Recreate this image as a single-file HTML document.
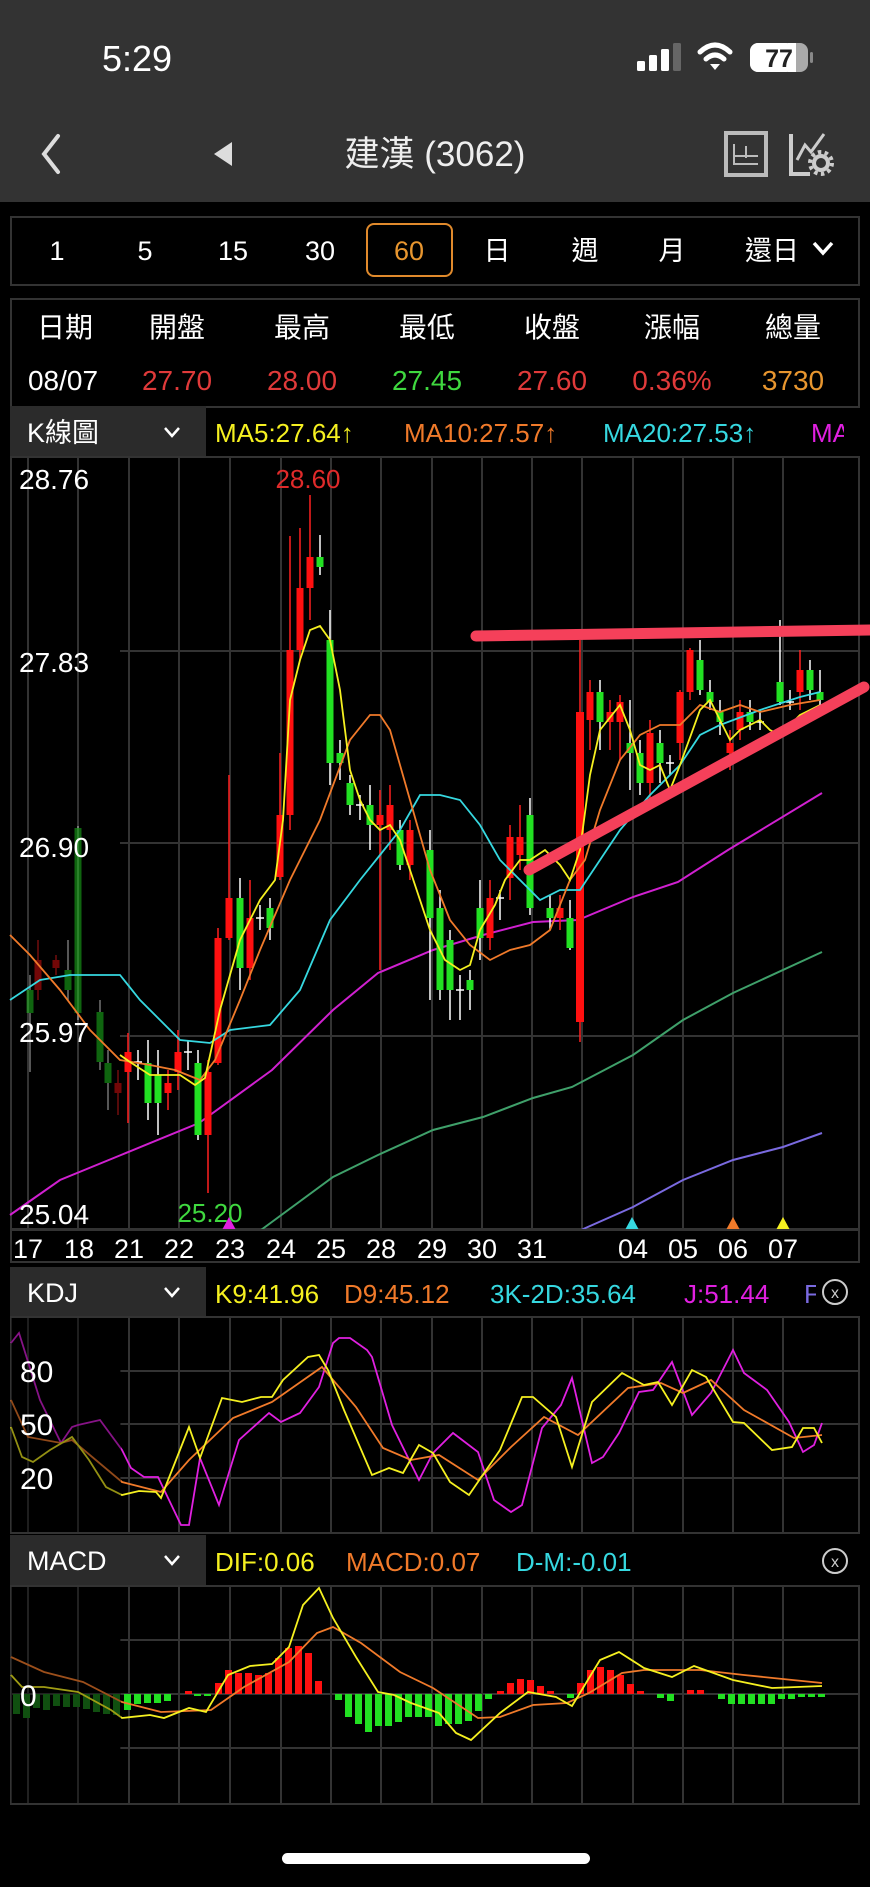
<!DOCTYPE html>
<html><head><meta charset="utf-8">
<style>
html,body{margin:0;padding:0;background:#000;}
body{width:870px;height:1882px;overflow:hidden;font-family:"Liberation Sans","Noto Sans CJK TC",sans-serif;}
svg text{font-family:"Liberation Sans","Noto Sans CJK TC",sans-serif;}
.r line{stroke:#ff2020;stroke-width:1.5}.r rect{fill:#ff1010}
.g line{stroke:#fff;stroke-width:1.5}.g rect{fill:#22e022}
.c line{stroke:#fff;stroke-width:1.5}
.grid line{stroke:#333;stroke-width:2}
</style></head><body>
<svg width="870" height="1882" viewBox="0 0 870 1882" xmlns="http://www.w3.org/2000/svg">
<rect x="0" y="0" width="870" height="202" fill="#333"/>
<text x="102" y="71" fill="#fff" font-size="36">5:29</text>
<rect x="637" y="61" width="8" height="10" rx="1.5" fill="#fff"/>
<rect x="649" y="55" width="8" height="16" rx="1.5" fill="#fff"/>
<rect x="661" y="49" width="8" height="22" rx="1.5" fill="#fff"/>
<rect x="673" y="43" width="8" height="28" rx="1.5" fill="#666"/>
<path d="M700 52 Q715 38 730 52" stroke="#fff" stroke-width="5" fill="none" stroke-linecap="round"/>
<path d="M706 59 Q715 51 724 59" stroke="#fff" stroke-width="5" fill="none" stroke-linecap="round"/>
<path d="M710 64 L715 70 L720 64 Z" fill="#fff"/>
<rect x="750" y="43" width="58" height="29" rx="8" fill="#aaa"/>
<rect x="750" y="43" width="44" height="29" rx="8" fill="#fff"/>
<rect x="788" y="43" width="8" height="29" fill="#fff"/>
<rect x="810" y="52" width="3" height="11" rx="1.5" fill="#888"/>
<text x="779" y="67" fill="#222" font-size="25" font-weight="bold" text-anchor="middle">77</text>
<path d="M58 136 L44 154 L58 172" stroke="#ddd" stroke-width="4" fill="none" stroke-linecap="round"/>
<path d="M232 142 L214 154 L232 166 Z" fill="#ddd"/>
<text x="435" y="166" fill="#eee" font-size="35" text-anchor="middle">建漢 (3062)</text>
<rect x="726" y="133" width="40" height="42" fill="none" stroke="#bbb" stroke-width="4"/>
<path d="M734 144 V164 H758 M734 156 H758 M746 146 V158" stroke="#bbb" stroke-width="2" fill="none"/>
<path d="M791 134 V174 H810" stroke="#ccc" stroke-width="4" fill="none"/>
<path d="M797 160 L805 145 L811 152 L824 134" stroke="#ccc" stroke-width="3" fill="none"/>
<circle cx="821" cy="163" r="7" fill="none" stroke="#ccc" stroke-width="4"/>
<circle cx="821" cy="163" r="11" fill="none" stroke="#ccc" stroke-width="4" stroke-dasharray="3.5 3.4"/>

<rect x="11" y="217" width="848" height="68" fill="#000" stroke="#333" stroke-width="2"/>
<g fill="#fff" font-size="27" text-anchor="middle">
<text x="57" y="260">1</text><text x="145" y="260">5</text><text x="233" y="260">15</text><text x="320" y="260">30</text>
<text x="497" y="260">日</text><text x="585" y="260">週</text><text x="672" y="260">月</text><text x="772" y="260">還日</text></g>
<rect x="367" y="224" width="85" height="52" rx="7" fill="none" stroke="#e08a2c" stroke-width="2"/>
<text x="409" y="260" fill="#e8962f" font-size="27" text-anchor="middle">60</text>
<path d="M814 243 L823 253 L832 243" stroke="#fff" stroke-width="3.5" fill="none"/>

<rect x="11" y="299" width="848" height="108" fill="#000" stroke="#333" stroke-width="2"/>
<g fill="#fff" font-size="28" text-anchor="middle">
<text x="65" y="337">日期</text><text x="177" y="337">開盤</text><text x="302" y="337">最高</text><text x="427" y="337">最低</text><text x="552" y="337">收盤</text><text x="672" y="337">漲幅</text><text x="793" y="337">總量</text></g>
<g font-size="28" text-anchor="middle">
<text x="63" y="390" fill="#fff">08/07</text><text x="177" y="390" fill="#e03a3a">27.70</text><text x="302" y="390" fill="#e03a3a">28.00</text><text x="427" y="390" fill="#3fd83f">27.45</text><text x="552" y="390" fill="#e03a3a">27.60</text><text x="672" y="390" fill="#e03a3a">0.36%</text><text x="793" y="390" fill="#e8962f">3730</text></g>

<rect x="10" y="406" width="196" height="50" fill="#2b2b2b"/>
<rect x="206" y="410" width="654" height="46" fill="#000"/>
<text x="27" y="442" fill="#fff" font-size="27">K線圖</text>
<path d="M165 428 L172 436 L179 428" stroke="#fff" stroke-width="2.5" fill="none"/>
<svg x="206" y="406" width="638" height="50"><g font-size="26">
<text x="9" y="36" fill="#f5f020">MA5:27.64↑</text><text x="198" y="36" fill="#f07a2a">MA10:27.57↑</text><text x="397" y="36" fill="#36d8e0">MA20:27.53↑</text><text x="605" y="36" fill="#e020e0">MA</text></g></svg>

<g class="grid">
<rect x="11" y="457" width="848" height="772" fill="none" stroke="#333" stroke-width="2"/>
<line x1="120" y1="651" x2="859" y2="651"/><line x1="120" y1="843" x2="859" y2="843"/><line x1="120" y1="1036" x2="859" y2="1036"/>
<line x1="28" y1="457" x2="28" y2="1229"/><line x1="78" y1="457" x2="78" y2="1229"/><line x1="129" y1="457" x2="129" y2="1229"/><line x1="179" y1="457" x2="179" y2="1229"/><line x1="230" y1="457" x2="230" y2="1229"/><line x1="281" y1="457" x2="281" y2="1229"/><line x1="331" y1="457" x2="331" y2="1229"/><line x1="381" y1="457" x2="381" y2="1229"/><line x1="432" y1="457" x2="432" y2="1229"/><line x1="482" y1="457" x2="482" y2="1229"/><line x1="532" y1="457" x2="532" y2="1229"/><line x1="582" y1="457" x2="582" y2="1229"/><line x1="633" y1="457" x2="633" y2="1229"/><line x1="683" y1="457" x2="683" y2="1229"/><line x1="733" y1="457" x2="733" y2="1229"/><line x1="783" y1="457" x2="783" y2="1229"/>
</g>
<text x="308" y="488" fill="#e02a2a" font-size="26" text-anchor="middle">28.60</text>
<text x="210" y="1222" fill="#3fd83f" font-size="26" text-anchor="middle">25.20</text>

<polyline fill="none" stroke="#d020d0" stroke-width="2" points="10,1215 60,1180 121,1155 199,1123 272,1070 333,1010 378,973 433,950 483,935 533,922 578,920 633,897 678,882 728,850 822,793"/>
<polyline fill="none" stroke="#3fa06a" stroke-width="2" points="261,1230 333,1177 378,1155 433,1130 483,1117 533,1098 572,1087 633,1055 683,1020 733,993 822,952"/>
<polyline fill="none" stroke="#7a6ae0" stroke-width="2" points="581,1230 633,1207 683,1180 733,1160 783,1147 822,1133"/>

<g opacity="0.45">
<g class="g"><line x1="30" y1="975" x2="30" y2="1072"/><rect x="26.5" y="990" width="7" height="23"/></g>
<g class="r"><line x1="38" y1="940" x2="38" y2="1000"/><rect x="34.5" y="960" width="7" height="30"/></g>
<g class="r"><line x1="56" y1="955" x2="56" y2="975"/><rect x="52.5" y="960" width="7" height="8"/></g>
<g class="g"><line x1="68" y1="940" x2="68" y2="1000"/><rect x="64.5" y="970" width="7" height="20"/></g>
<g class="g"><line x1="78" y1="826" x2="78" y2="1020"/><rect x="74.5" y="828" width="7" height="185"/></g>
<g class="g"><line x1="100" y1="1000" x2="100" y2="1070"/><rect x="96.5" y="1012" width="7" height="50"/></g>
<g class="g"><line x1="108" y1="1050" x2="108" y2="1110"/><rect x="104.5" y="1063" width="7" height="20"/></g>
<g class="r"><line x1="118" y1="1070" x2="118" y2="1115"/><rect x="114.5" y="1083" width="7" height="10"/></g>
</g>
<g class="r"><line x1="128" y1="1033" x2="128" y2="1123"/><rect x="124.5" y="1052" width="7" height="20"/></g>
<g class="c"><line x1="138" y1="1050" x2="138" y2="1080"/><line x1="134" y1="1062" x2="142" y2="1062"/></g>
<g class="g"><line x1="148" y1="1040" x2="148" y2="1120"/><rect x="144.5" y="1063" width="7" height="40"/></g>
<g class="g"><line x1="158" y1="1050" x2="158" y2="1135"/><rect x="154.5" y="1075" width="7" height="28"/></g>
<g class="r"><line x1="168" y1="1070" x2="168" y2="1110"/><rect x="164.5" y="1083" width="7" height="10"/></g>
<g class="r"><line x1="178" y1="1030" x2="178" y2="1090"/><rect x="174.5" y="1052" width="7" height="20"/></g>
<g class="c"><line x1="188" y1="1040" x2="188" y2="1070"/><line x1="184" y1="1052" x2="192" y2="1052"/></g>
<g class="g"><line x1="198" y1="1050" x2="198" y2="1140"/><rect x="194.5" y="1063" width="7" height="72"/></g>
<g class="r"><line x1="208" y1="1060" x2="208" y2="1193" stroke="#fff"/><rect x="204.5" y="1072" width="7" height="63"/></g>
<g class="r"><line x1="218" y1="928" x2="218" y2="1065"/><rect x="214.5" y="938" width="7" height="125"/></g>
<g class="r"><line x1="229" y1="775" x2="229" y2="940" stroke="#fff"/><rect x="225.5" y="898" width="7" height="40"/></g>
<g class="g"><line x1="240" y1="878" x2="240" y2="990"/><rect x="236.5" y="898" width="7" height="70"/></g>
<g class="r"><line x1="250" y1="880" x2="250" y2="980" stroke="#fff"/><rect x="246.5" y="918" width="7" height="50"/></g>
<g class="c"><line x1="260" y1="905" x2="260" y2="930"/><line x1="256" y1="918" x2="264" y2="918"/></g>
<g class="g"><line x1="270" y1="898" x2="270" y2="940"/><rect x="266.5" y="908" width="7" height="20"/></g>
<g class="r"><line x1="280" y1="753" x2="280" y2="880" stroke="#fff"/><rect x="276.5" y="815" width="7" height="62"/></g>
<g class="r"><line x1="290" y1="536" x2="290" y2="830" stroke="#fff"/><rect x="286.5" y="650" width="7" height="165"/></g>
<g class="r"><line x1="300" y1="528" x2="300" y2="660" stroke="#fff"/><rect x="296.5" y="588" width="7" height="62"/></g>
<g class="r"><line x1="310" y1="495" x2="310" y2="620" stroke="#fff"/><rect x="306.5" y="557" width="7" height="31"/></g>
<g class="g"><line x1="320" y1="535" x2="320" y2="575"/><rect x="316.5" y="557" width="7" height="10"/></g>
<g class="g"><line x1="330" y1="610" x2="330" y2="785"/><rect x="326.5" y="640" width="7" height="123"/></g>
<g class="g"><line x1="340" y1="740" x2="340" y2="780"/><rect x="336.5" y="753" width="7" height="10"/></g>
<g class="g"><line x1="350" y1="775" x2="350" y2="815"/><rect x="346.5" y="783" width="7" height="22"/></g>
<g class="c"><line x1="360" y1="795" x2="360" y2="820"/><line x1="356" y1="805" x2="364" y2="805"/></g>
<g class="g"><line x1="370" y1="785" x2="370" y2="850"/><rect x="366.5" y="805" width="7" height="20"/></g>
<g class="r"><line x1="380" y1="790" x2="380" y2="970" stroke="#fff"/><rect x="376.5" y="815" width="7" height="10"/></g>
<g class="r"><line x1="390" y1="785" x2="390" y2="850" stroke="#fff"/><rect x="386.5" y="805" width="7" height="25"/></g>
<g class="g"><line x1="400" y1="820" x2="400" y2="870"/><rect x="396.5" y="830" width="7" height="35"/></g>
<g class="r"><line x1="410" y1="820" x2="410" y2="880" stroke="#fff"/><rect x="406.5" y="830" width="7" height="35"/></g>
<g class="g"><line x1="430" y1="830" x2="430" y2="1000"/><rect x="426.5" y="850" width="7" height="68"/></g>
<g class="g"><line x1="440" y1="890" x2="440" y2="1000"/><rect x="436.5" y="908" width="7" height="82"/></g>
<g class="g"><line x1="450" y1="930" x2="450" y2="1020"/><rect x="446.5" y="940" width="7" height="50"/></g>
<g class="c"><line x1="460" y1="975" x2="460" y2="1020"/><line x1="456" y1="990" x2="464" y2="990"/></g>
<g class="g"><line x1="470" y1="970" x2="470" y2="1010"/><rect x="466.5" y="980" width="7" height="10"/></g>
<g class="g"><line x1="480" y1="880" x2="480" y2="960"/><rect x="476.5" y="908" width="7" height="30"/></g>
<g class="r"><line x1="490" y1="880" x2="490" y2="950" stroke="#fff"/><rect x="486.5" y="898" width="7" height="40"/></g>
<g class="c"><line x1="500" y1="890" x2="500" y2="920"/><line x1="496" y1="898" x2="504" y2="898"/></g>
<g class="r"><line x1="510" y1="825" x2="510" y2="900" stroke="#fff"/><rect x="506.5" y="837" width="7" height="41"/></g>
<g class="r"><line x1="520" y1="805" x2="520" y2="870" stroke="#fff"/><rect x="516.5" y="837" width="7" height="18"/></g>
<g class="g"><line x1="530" y1="798" x2="530" y2="915"/><rect x="526.5" y="815" width="7" height="93"/></g>
<g class="g"><line x1="550" y1="895" x2="550" y2="930"/><rect x="546.5" y="908" width="7" height="10"/></g>
<g class="r"><line x1="560" y1="895" x2="560" y2="930" stroke="#fff"/><rect x="556.5" y="908" width="7" height="10"/></g>
<g class="g"><line x1="570" y1="900" x2="570" y2="950"/><rect x="566.5" y="918" width="7" height="30"/></g>
<g class="r"><line x1="580" y1="640" x2="580" y2="1042" stroke="#fff"/><rect x="576" y="712" width="8" height="310"/></g>
<g class="r"><line x1="590" y1="680" x2="590" y2="750" stroke="#fff"/><rect x="586.5" y="692" width="7" height="28"/></g>
<g class="g"><line x1="600" y1="680" x2="600" y2="750"/><rect x="596.5" y="692" width="7" height="30"/></g>
<g class="r"><line x1="610" y1="700" x2="610" y2="750" stroke="#fff"/><rect x="606.5" y="712" width="7" height="10"/></g>
<g class="r"><line x1="620" y1="695" x2="620" y2="760" stroke="#fff"/><rect x="616.5" y="702" width="7" height="20"/></g>
<g class="g"><line x1="630" y1="700" x2="630" y2="790"/><rect x="626.5" y="743" width="7" height="10"/></g>
<g class="g"><line x1="640" y1="740" x2="640" y2="795"/><rect x="636.5" y="753" width="7" height="30"/></g>
<g class="r"><line x1="650" y1="720" x2="650" y2="800" stroke="#fff"/><rect x="646.5" y="733" width="7" height="50"/></g>
<g class="g"><line x1="660" y1="730" x2="660" y2="783"/><rect x="656.5" y="743" width="7" height="20"/></g>
<g class="c"><line x1="670" y1="755" x2="670" y2="775"/><line x1="666" y1="763" x2="674" y2="763"/></g>
<g class="r"><line x1="680" y1="690" x2="680" y2="760" stroke="#fff"/><rect x="676.5" y="692" width="7" height="51"/></g>
<g class="r"><line x1="690" y1="648" x2="690" y2="700" stroke="#fff"/><rect x="686.5" y="650" width="7" height="42"/></g>
<g class="g"><line x1="700" y1="640" x2="700" y2="695"/><rect x="696.5" y="660" width="7" height="30"/></g>
<g class="g"><line x1="710" y1="680" x2="710" y2="710"/><rect x="706.5" y="692" width="7" height="10"/></g>
<g class="g"><line x1="720" y1="700" x2="720" y2="735"/><rect x="716.5" y="712" width="7" height="10"/></g>
<g class="r"><line x1="730" y1="730" x2="730" y2="770" stroke="#fff"/><rect x="726.5" y="743" width="7" height="10"/></g>
<g class="r"><line x1="740" y1="700" x2="740" y2="740" stroke="#fff"/><rect x="736.5" y="712" width="7" height="18"/></g>
<g class="g"><line x1="750" y1="700" x2="750" y2="730"/><rect x="746.5" y="712" width="7" height="10"/></g>
<g class="c"><line x1="760" y1="710" x2="760" y2="730"/><line x1="756" y1="722" x2="764" y2="722"/></g>
<g class="g"><line x1="780" y1="620" x2="780" y2="705"/><rect x="776.5" y="682" width="7" height="20"/></g>
<g class="c"><line x1="790" y1="690" x2="790" y2="710"/><line x1="786" y1="702" x2="794" y2="702"/></g>
<g class="r"><line x1="800" y1="650" x2="800" y2="710" stroke="#fff"/><rect x="796.5" y="670" width="7" height="22"/></g>
<g class="g"><line x1="810" y1="660" x2="810" y2="700"/><rect x="806.5" y="670" width="7" height="20"/></g>
<g class="g"><line x1="820" y1="670" x2="820" y2="710"/><rect x="816.5" y="692" width="7" height="8"/></g>

<polyline fill="none" stroke="#36d8e0" stroke-width="1.8" points="10,1000 40,980 70,975 120,975 140,1000 160,1020 180,1040 210,1043 230,1030 270,1025 300,990 330,920 360,880 400,830 420,795 440,795 460,800 480,825 500,860 520,880 540,900 560,890 580,890 600,860 620,830 650,795 680,765 700,735 720,725 760,710 800,697 820,692"/>
<polyline fill="none" stroke="#f07a2a" stroke-width="1.8" points="10,935 30,955 60,990 90,1030 120,1060 150,1065 175,1070 200,1080 215,1060 240,1000 260,950 290,880 320,820 350,740 370,715 380,715 390,730 410,800 430,870 450,920 470,945 490,960 510,950 530,945 550,930 570,880 585,860 600,810 620,760 640,735 660,725 680,725 700,705 720,712 740,705 760,712 790,705 820,700"/>
<polyline fill="none" stroke="#f5f020" stroke-width="1.8" points="120,1055 130,1062 150,1075 180,1075 195,1085 205,1078 220,1010 240,940 260,900 275,880 283,820 290,700 300,660 310,630 320,626 330,640 340,690 350,770 360,800 370,820 380,830 390,825 400,840 410,870 430,930 445,960 460,970 470,965 480,930 495,905 505,880 520,860 530,860 545,850 560,865 570,880 580,850 590,775 600,730 620,705 630,730 640,765 650,770 660,765 670,790 680,765 700,710 710,700 720,720 730,740 740,730 750,725 760,720 770,730 780,735 790,725 800,715 810,710 820,705"/>

<line x1="476" y1="636" x2="870" y2="630" stroke="#f5405a" stroke-width="11" stroke-linecap="round"/>
<line x1="529" y1="870" x2="864" y2="687" stroke="#f5405a" stroke-width="11" stroke-linecap="round"/>

<g fill="#fff" font-size="28">
<text x="19" y="489">28.76</text><text x="19" y="672">27.83</text><text x="19" y="857">26.90</text><text x="19" y="1042">25.97</text><text x="19" y="1224">25.04</text></g>

<path d="M222 1230 L229 1217 L236 1230 Z" fill="#e020e0"/>
<path d="M625 1230 L632 1217 L639 1230 Z" fill="#36d8e0"/>
<path d="M726 1230 L733 1217 L740 1230 Z" fill="#f07a2a"/>
<path d="M776 1230 L783 1217 L790 1230 Z" fill="#f5f020"/>

<rect x="11" y="1230" width="848" height="32" fill="#000" stroke="#333" stroke-width="2"/>
<g fill="#fff" font-size="27" text-anchor="middle">
<text x="28" y="1258">17</text><text x="79" y="1258">18</text><text x="129" y="1258">21</text><text x="179" y="1258">22</text><text x="230" y="1258">23</text><text x="281" y="1258">24</text><text x="331" y="1258">25</text><text x="381" y="1258">28</text><text x="432" y="1258">29</text><text x="482" y="1258">30</text><text x="532" y="1258">31</text><text x="633" y="1258">04</text><text x="683" y="1258">05</text><text x="733" y="1258">06</text><text x="783" y="1258">07</text></g>

<rect x="10" y="1267" width="196" height="50" fill="#2b2b2b"/>
<text x="27" y="1302" fill="#fff" font-size="27">KDJ</text>
<path d="M165 1288 L172 1296 L179 1288" stroke="#fff" stroke-width="2.5" fill="none"/>
<svg x="206" y="1267" width="610" height="50"><g font-size="26">
<text x="9" y="36" fill="#f5f020">K9:41.96</text><text x="138" y="36" fill="#f07a2a">D9:45.12</text><text x="284" y="36" fill="#36d8e0">3K-2D:35.64</text><text x="478" y="36" fill="#e020e0">J:51.44</text><text x="598" y="36" fill="#7a6ae0">F</text></g></svg>
<circle cx="835" cy="1292" r="12" fill="none" stroke="#ccc" stroke-width="2"/>
<text x="835" y="1298" fill="#ccc" font-size="16" text-anchor="middle">x</text>

<g class="grid">
<rect x="11" y="1317" width="848" height="216" fill="none" stroke="#333" stroke-width="2"/>
<line x1="120" y1="1371" x2="859" y2="1371"/><line x1="120" y1="1424" x2="859" y2="1424"/><line x1="120" y1="1478" x2="859" y2="1478"/>
<line x1="28" y1="1317" x2="28" y2="1533"/><line x1="78" y1="1317" x2="78" y2="1533"/><line x1="129" y1="1317" x2="129" y2="1533"/><line x1="179" y1="1317" x2="179" y2="1533"/><line x1="230" y1="1317" x2="230" y2="1533"/><line x1="281" y1="1317" x2="281" y2="1533"/><line x1="331" y1="1317" x2="331" y2="1533"/><line x1="381" y1="1317" x2="381" y2="1533"/><line x1="432" y1="1317" x2="432" y2="1533"/><line x1="482" y1="1317" x2="482" y2="1533"/><line x1="532" y1="1317" x2="532" y2="1533"/><line x1="582" y1="1317" x2="582" y2="1533"/><line x1="633" y1="1317" x2="633" y2="1533"/><line x1="683" y1="1317" x2="683" y2="1533"/><line x1="733" y1="1317" x2="733" y2="1533"/><line x1="783" y1="1317" x2="783" y2="1533"/>
</g>
<polyline fill="none" stroke="#e020e0" stroke-width="1.8" points="11,1343 19,1333 40,1400 61,1443 72,1427 78,1425 100,1420 122,1450 131,1468 144,1477 158,1477 181,1525 189,1525 200,1458 219,1505 239,1440 269,1413 281,1422 300,1413 319,1387 333,1343 339,1338 350,1338 367,1350 372,1357 392,1425 419,1480 433,1453 453,1433 478,1452 494,1500 511,1512 522,1505 542,1428 561,1405 572,1378 592,1463 603,1457 619,1433 639,1392 653,1390 672,1362 692,1415 711,1393 733,1350 744,1373 767,1390 789,1422 803,1452 814,1445 822,1423"/>
<polyline fill="none" stroke="#f07a2a" stroke-width="1.8" points="11,1400 28,1437 61,1443 72,1440 122,1482 161,1492 189,1460 233,1418 272,1402 322,1367 356,1407 383,1448 411,1460 439,1455 478,1480 511,1447 544,1417 578,1435 628,1388 661,1383 683,1393 711,1380 744,1410 794,1438 822,1435"/>
<polyline fill="none" stroke="#f5f020" stroke-width="1.8" points="11,1427 22,1457 33,1462 50,1450 72,1437 89,1460 106,1487 122,1495 139,1491 156,1492 161,1498 189,1427 200,1458 222,1398 242,1402 261,1397 272,1397 283,1380 308,1357 319,1355 328,1370 344,1410 372,1475 389,1468 403,1473 419,1445 433,1453 450,1482 469,1495 500,1450 522,1397 533,1397 556,1417 572,1467 592,1402 622,1373 644,1385 658,1382 672,1405 692,1370 706,1377 733,1422 744,1423 772,1450 792,1447 803,1428 814,1428 822,1443"/>
<rect x="11" y="1318" width="110" height="214" fill="#000" opacity="0.4"/>
<g fill="#fff" font-size="30"><text x="20" y="1382">80</text><text x="20" y="1435">50</text><text x="20" y="1489">20</text></g>

<rect x="10" y="1535" width="196" height="50" fill="#2b2b2b"/>
<text x="27" y="1570" fill="#fff" font-size="27">MACD</text>
<path d="M165 1556 L172 1564 L179 1556" stroke="#fff" stroke-width="2.5" fill="none"/>
<g font-size="26"><text x="215" y="1571" fill="#f5f020">DIF:0.06</text><text x="346" y="1571" fill="#f07a2a">MACD:0.07</text><text x="516" y="1571" fill="#36d8e0">D-M:-0.01</text></g>
<circle cx="835" cy="1561" r="12" fill="none" stroke="#ccc" stroke-width="2"/>
<text x="835" y="1567" fill="#ccc" font-size="16" text-anchor="middle">x</text>

<g class="grid">
<rect x="11" y="1586" width="848" height="218" fill="none" stroke="#333" stroke-width="2"/>
<line x1="120" y1="1640" x2="859" y2="1640"/><line x1="11" y1="1694" x2="859" y2="1694"/><line x1="120" y1="1748" x2="859" y2="1748"/>
<line x1="28" y1="1586" x2="28" y2="1804"/><line x1="78" y1="1586" x2="78" y2="1804"/><line x1="129" y1="1586" x2="129" y2="1804"/><line x1="179" y1="1586" x2="179" y2="1804"/><line x1="230" y1="1586" x2="230" y2="1804"/><line x1="281" y1="1586" x2="281" y2="1804"/><line x1="331" y1="1586" x2="331" y2="1804"/><line x1="381" y1="1586" x2="381" y2="1804"/><line x1="432" y1="1586" x2="432" y2="1804"/><line x1="482" y1="1586" x2="482" y2="1804"/><line x1="532" y1="1586" x2="532" y2="1804"/><line x1="582" y1="1586" x2="582" y2="1804"/><line x1="633" y1="1586" x2="633" y2="1804"/><line x1="683" y1="1586" x2="683" y2="1804"/><line x1="733" y1="1586" x2="733" y2="1804"/><line x1="783" y1="1586" x2="783" y2="1804"/>
</g>
<g fill="#1a7a1a">
<rect x="13" y="1694" width="7" height="20"/><rect x="23" y="1694" width="7" height="24"/><rect x="33" y="1694" width="7" height="14"/><rect x="43" y="1694" width="7" height="16"/><rect x="53" y="1694" width="7" height="12"/><rect x="63" y="1694" width="7" height="13"/><rect x="73" y="1694" width="7" height="13"/><rect x="83" y="1694" width="7" height="15"/><rect x="93" y="1694" width="7" height="18"/><rect x="103" y="1694" width="7" height="20"/><rect x="113" y="1694" width="7" height="21"/></g>
<g fill="#22e022">
<rect x="124" y="1694" width="7" height="16"/><rect x="134" y="1694" width="7" height="10"/><rect x="144" y="1694" width="7" height="9"/><rect x="154" y="1694" width="7" height="9"/><rect x="164" y="1694" width="7" height="7"/><rect x="194" y="1694" width="7" height="2"/><rect x="204" y="1694" width="7" height="2"/>
<rect x="335" y="1694" width="7" height="6"/><rect x="345" y="1694" width="7" height="23"/><rect x="355" y="1694" width="7" height="30"/><rect x="365" y="1694" width="7" height="38"/><rect x="375" y="1694" width="7" height="32"/><rect x="385" y="1694" width="7" height="32"/><rect x="395" y="1694" width="7" height="28"/><rect x="405" y="1694" width="7" height="23"/><rect x="415" y="1694" width="7" height="23"/><rect x="425" y="1694" width="7" height="23"/><rect x="435" y="1694" width="7" height="32"/><rect x="445" y="1694" width="7" height="30"/><rect x="455" y="1694" width="7" height="30"/><rect x="465" y="1694" width="7" height="27"/><rect x="475" y="1694" width="7" height="17"/><rect x="485" y="1694" width="7" height="5"/>
<rect x="567" y="1694" width="7" height="4"/><rect x="657" y="1694" width="7" height="4"/><rect x="667" y="1694" width="7" height="7"/>
<rect x="718" y="1694" width="7" height="5"/><rect x="728" y="1694" width="7" height="10"/><rect x="738" y="1694" width="7" height="10"/><rect x="748" y="1694" width="7" height="10"/><rect x="758" y="1694" width="7" height="10"/><rect x="768" y="1694" width="7" height="10"/><rect x="778" y="1694" width="7" height="5"/><rect x="788" y="1694" width="7" height="5"/><rect x="798" y="1694" width="7" height="3"/><rect x="808" y="1694" width="7" height="3"/><rect x="818" y="1694" width="7" height="3"/></g>
<g fill="#ff1010">
<rect x="185" y="1691" width="7" height="3"/>
<rect x="215" y="1683" width="7" height="11"/><rect x="225" y="1670" width="7" height="24"/><rect x="235" y="1673" width="7" height="21"/><rect x="245" y="1673" width="7" height="21"/><rect x="255" y="1675" width="7" height="19"/><rect x="265" y="1673" width="7" height="21"/><rect x="275" y="1658" width="7" height="36"/><rect x="285" y="1648" width="7" height="46"/><rect x="295" y="1646" width="7" height="48"/><rect x="305" y="1653" width="7" height="41"/><rect x="315" y="1681" width="7" height="13"/>
<rect x="497" y="1691" width="7" height="3"/><rect x="507" y="1683" width="7" height="11"/><rect x="517" y="1679" width="7" height="15"/><rect x="527" y="1680" width="7" height="14"/><rect x="537" y="1686" width="7" height="8"/><rect x="547" y="1691" width="7" height="3"/>
<rect x="577" y="1683" width="7" height="11"/><rect x="587" y="1670" width="7" height="24"/><rect x="597" y="1667" width="7" height="27"/><rect x="607" y="1670" width="7" height="24"/><rect x="617" y="1675" width="7" height="19"/><rect x="627" y="1684" width="7" height="10"/><rect x="637" y="1691" width="7" height="3"/>
<rect x="687" y="1690" width="7" height="4"/><rect x="697" y="1690" width="7" height="4"/></g>
<polyline fill="none" stroke="#f07a2a" stroke-width="1.8" points="11,1657 44,1672 83,1682 122,1702 161,1712 211,1710 244,1687 289,1662 317,1633 333,1627 361,1643 400,1672 433,1688 478,1718 500,1717 533,1705 567,1703 589,1693 622,1673 644,1670 700,1670 744,1675 822,1683"/>
<polyline fill="none" stroke="#f5f020" stroke-width="1.8" points="11,1675 22,1687 44,1687 78,1692 111,1710 122,1718 150,1715 164,1718 189,1708 206,1712 228,1675 250,1666 272,1664 289,1647 303,1605 319,1588 333,1618 356,1657 378,1692 394,1695 411,1703 439,1713 456,1733 471,1740 500,1713 528,1692 556,1697 572,1706 600,1660 619,1652 644,1668 672,1677 694,1666 733,1680 772,1688 822,1686"/>
<rect x="11" y="1587" width="110" height="216" fill="#000" opacity="0.35"/>
<text x="20" y="1706" fill="#fff" font-size="30">0</text>
<rect x="282" y="1853" width="308" height="11" rx="5.5" fill="#fff"/>
</svg>
</body></html>
